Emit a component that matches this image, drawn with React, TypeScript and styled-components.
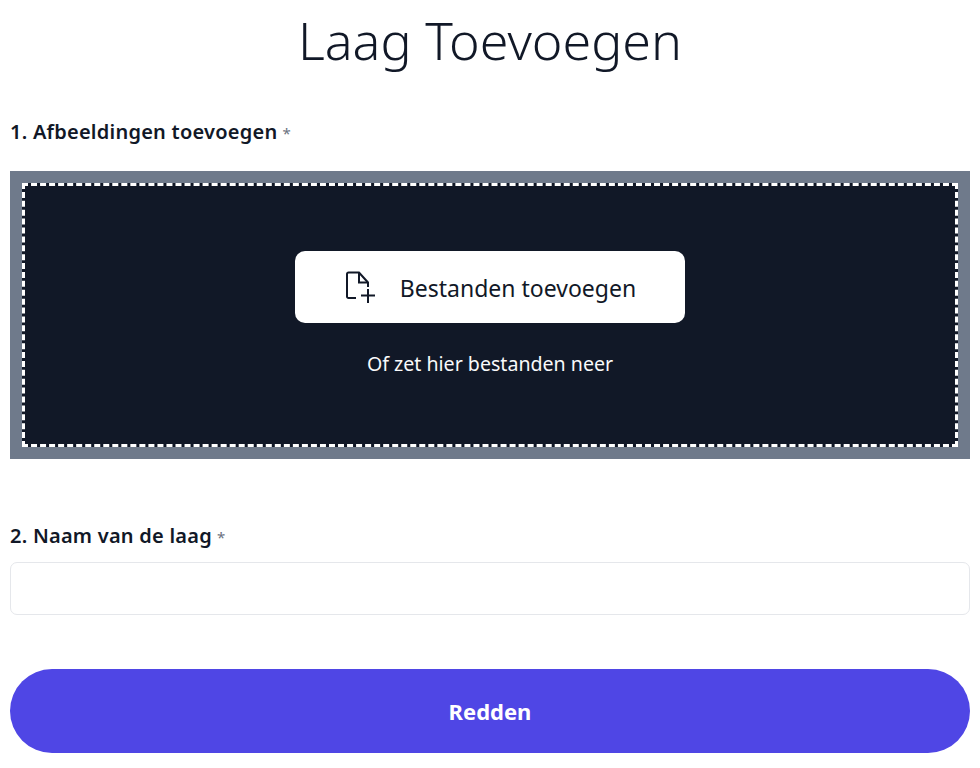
import React from 'react'
import styled, { createGlobalStyle } from 'styled-components'

const GlobalStyle = createGlobalStyle`
	* { box-sizing: border-box; }
	body {
		margin: 0;
		background: #fff;
		font-family: "Noto Sans", "Open Sans", sans-serif;
		color: #111827;
	}
`

const Page = styled.div`
	padding: 0 10px;
	display: flex;
	flex-direction: column;
`

const Title = styled.h1`
	margin: 0;
	height: 84px;
	font-size: 52px;
	line-height: 80px;
	font-weight: 300;
	text-align: center;
`

const Label = styled.label<{ $top: number }>`
	display: block;
	margin-top: ${props => props.$top}px;
	height: 24px;
	font-size: 20px;
	line-height: 24px;
	font-weight: 600;
	letter-spacing: .24px;
`

const Required = styled.span`
	margin-left: 5px;
	font-weight: 400;
	font-size: 15px;
	letter-spacing: 0;
	color: #6b7280;
`

const DropFrame = styled.div`
	margin-top: 27px;
	height: 288px;
	padding: 12px;
	background: #6f7a8b;
`

const DropZone = styled.div`
	height: 100%;
	background: #111827;
	border: 3px dashed #fff;
	display: flex;
	flex-direction: column;
	align-items: center;
	padding-top: 65px;
`

const AddButton = styled.button`
	width: 390px;
	height: 72px;
	border: none;
	border-radius: 10px;
	background: #fff;
	color: #111827;
	font-family: inherit;
	font-size: 23px;
	display: flex;
	align-items: center;
	justify-content: center;
	gap: 22px;
`

const AddButtonText = styled.span`
	padding-top: 2px;
`

const DropHint = styled.div`
	margin-top: 27px;
	font-size: 19.6px;
	line-height: 28px;
	color: #f9fafb;
`

const NameInput = styled.input`
	display: block;
	width: 100%;
	height: 53px;
	margin-top: 14px;
	border: 1px solid #e5e7eb;
	border-radius: 7px;
	background: #fff;
`

const SaveButton = styled.button`
	width: 100%;
	height: 84px;
	margin-top: 54px;
	border: none;
	border-radius: 42px;
	background: #4f46e5;
	color: #fff;
	font-family: inherit;
	font-size: 22px;
	font-weight: 700;
`

const FilePlusIcon = () => (
	<svg width="34" height="34" viewBox="0 0 34 34" fill="none" stroke="#111827" strokeWidth="2">
		<path d="M12 28H4.500A1.500 1.500 0 0 1 3 26.500V4A1.500 1.500 0 0 1 4.500 2.500H15L24 12.500V17" />
		<path d="M15 2.500V12.500H24" />
		<path d="M24 19V33M17 25.500H31" />
	</svg>
)

export default function App() {
	return (
		<Page>
			<GlobalStyle />
			<Title>Laag Toevoegen</Title>
			<Label $top={36}>
				1. Afbeeldingen toevoegen<Required>*</Required>
			</Label>
			<DropFrame>
				<DropZone>
					<AddButton>
						<FilePlusIcon />
						<AddButtonText>Bestanden toevoegen</AddButtonText>
					</AddButton>
					<DropHint>Of zet hier bestanden neer</DropHint>
				</DropZone>
			</DropFrame>
			<Label $top={65}>
				2. Naam van de laag<Required>*</Required>
			</Label>
			<NameInput type="text" />
			<SaveButton>Redden</SaveButton>
		</Page>
	)
}
